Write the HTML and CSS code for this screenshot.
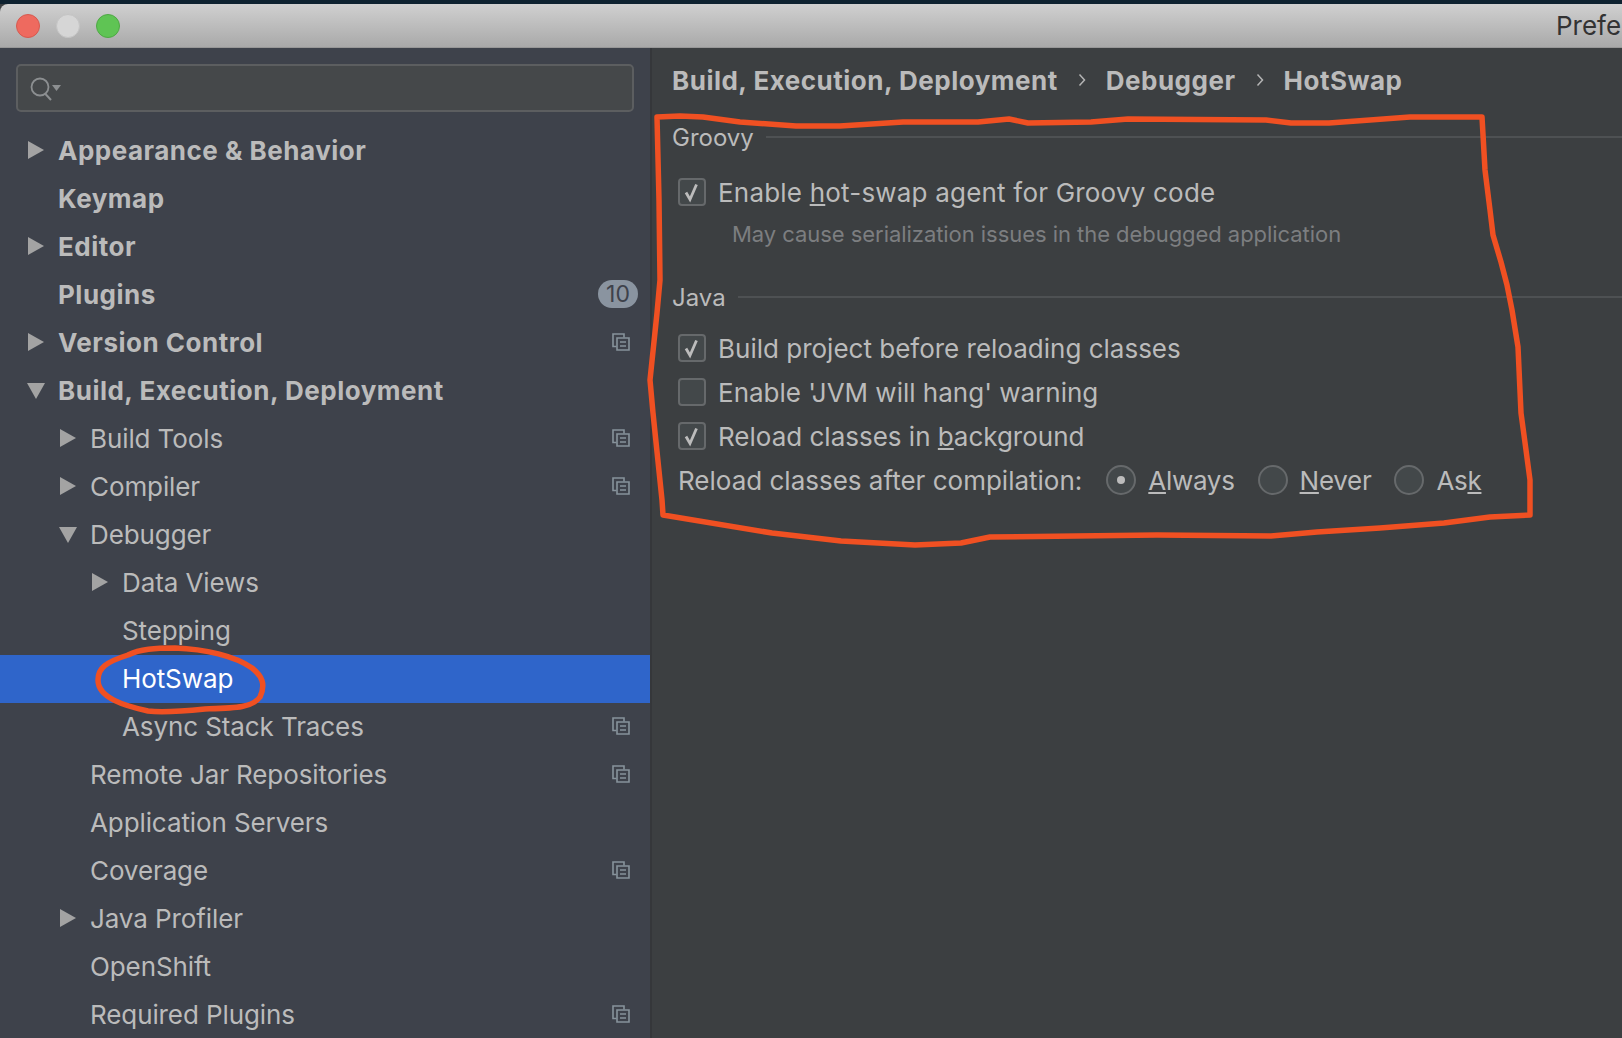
FILE: index.html
```html
<!DOCTYPE html>
<html lang="en">
<head>
  <meta charset="UTF-8" />
  <title>Preferences</title>
  <link rel="stylesheet" href="styles.css">
</head>
<body>
  <svg class="defs" width="0" height="0">
    <symbol id="copy" viewBox="0 0 18 18">
      <path d="M4.5 13.5H1V1h11v3.5" fill="none" stroke="currentColor" stroke-width="1.6"/>
      <path d="M5 5h12v12H5z" fill="none" stroke="currentColor" stroke-width="1.6"/>
      <path d="M8 9h6M8 13h6" stroke="currentColor" stroke-width="1.6"/>
    </symbol>
    <symbol id="check" viewBox="0 0 28 28">
      <path d="M8 14.500l4 7 6.500-15" fill="none" stroke="currentColor" stroke-width="2.800"/>
    </symbol>
  </svg>

  <div class="topstrip"></div>
  <header class="titlebar">
    <span class="light red"></span>
    <span class="light grey"></span>
    <span class="light green"></span>
    <span class="title">Preferences</span>
  </header>

  <div class="window">
    <aside class="sidebar">
      <div class="search">
        <svg width="36" height="28" viewBox="0 0 36 28">
          <circle cx="11" cy="12" r="8.500" fill="none" stroke="#8c8f91" stroke-width="1.800"/>
          <path d="M16 18.500l6 6.500" stroke="#8c8f91" stroke-width="2"/>
          <path d="M23 10h9l-4.500 6z" fill="#8c8f91"/>
        </svg>
      </div>

      <nav class="tree">
        <div class="row bold"><i class="arrow"></i>Appearance &amp; Behavior</div>
        <div class="row bold"><i class="noarrow"></i>Keymap</div>
        <div class="row bold"><i class="arrow"></i>Editor</div>
        <div class="row bold"><i class="noarrow"></i>Plugins<span class="badge">10</span></div>
        <div class="row bold"><i class="arrow"></i>Version Control<svg class="copy"><use href="#copy"/></svg></div>
        <div class="row bold"><i class="arrow open"></i>Build, Execution, Deployment</div>
        <div class="row lvl1"><i class="arrow"></i>Build Tools<svg class="copy"><use href="#copy"/></svg></div>
        <div class="row lvl1"><i class="arrow"></i>Compiler<svg class="copy"><use href="#copy"/></svg></div>
        <div class="row lvl1"><i class="arrow open"></i>Debugger</div>
        <div class="row lvl2"><i class="arrow"></i>Data Views</div>
        <div class="row lvl2"><i class="noarrow"></i>Stepping</div>
        <div class="row lvl2 selected"><i class="noarrow"></i>HotSwap</div>
        <div class="row lvl2"><i class="noarrow"></i>Async Stack Traces<svg class="copy"><use href="#copy"/></svg></div>
        <div class="row lvl1"><i class="noarrow"></i>Remote Jar Repositories<svg class="copy"><use href="#copy"/></svg></div>
        <div class="row lvl1"><i class="noarrow"></i>Application Servers</div>
        <div class="row lvl1"><i class="noarrow"></i>Coverage<svg class="copy"><use href="#copy"/></svg></div>
        <div class="row lvl1"><i class="arrow"></i>Java Profiler</div>
        <div class="row lvl1"><i class="noarrow"></i>OpenShift</div>
        <div class="row lvl1"><i class="noarrow"></i>Required Plugins<svg class="copy"><use href="#copy"/></svg></div>
      </nav>
    </aside>

    <main class="content">
      <div class="crumbs">
        <span>Build, Execution, Deployment</span>
        <svg class="chev" width="8" height="14" viewBox="0 0 8 14"><path d="M1.500 1.500L6.500 7l-5 5.500" fill="none" stroke="#b4b4b4" stroke-width="1.500"/></svg>
        <span>Debugger</span>
        <svg class="chev" width="8" height="14" viewBox="0 0 8 14"><path d="M1.500 1.500L6.500 7l-5 5.500" fill="none" stroke="#b4b4b4" stroke-width="1.500"/></svg>
        <span>HotSwap</span>
      </div>

      <section class="group groovy">
        <div class="group-title"><span>Groovy</span></div>
        <label class="opt first wide"><span class="box"><svg><use href="#check"/></svg></span>Enable&nbsp;<u>h</u>ot-swap agent for Groovy code</label>
        <p class="note">May cause serialization issues in the debugged application</p>
      </section>

      <section class="group java">
        <div class="group-title"><span>Java</span></div>
        <label class="opt first"><span class="box"><svg><use href="#check"/></svg></span>Build project before reloading classes</label>
        <label class="opt"><span class="box"></span>Enable 'JVM will hang' warning</label>
        <label class="opt"><span class="box"><svg><use href="#check"/></svg></span>Reload classes in&nbsp;<u>b</u>ackground</label>
        <div class="opt radios">
          <span class="radios-label">Reload classes after compilation:</span>
          <span class="radio on"></span><span class="radio-text"><u>A</u>lways</span>
          <span class="radio"></span><span class="radio-text"><u>N</u>ever</span>
          <span class="radio"></span><span class="radio-text">As<u>k</u></span>
        </div>
      </section>
    </main>
  </div>

  <!-- hand drawn red marks on top of the screenshot -->
  <svg class="marks" width="1622" height="1038" viewBox="0 0 1622 1038">
    <path d="M657 117L680 116L703 117L740 122L796 126L840 126L903 122L978 122L1009 119L1028 123L1091 122L1128 119L1266 120L1291 123L1329 123L1370 120L1410 117L1482 117L1485 170L1490 210L1493 235L1501 262L1507 285L1512 310L1518 347L1521 413L1526 450L1530 480L1530 515L1490 517L1444 523L1380 528L1317 532L1271 536L1157 535L990 537L961 543L915 545L841 541L772 533L663 515L662 500L653 413L650 380L657 313L660 280L659 200Z"/>
    <path d="M98 680C98 668 106 662 128 655C140 649 155 648 175 648C205 649 235 656 252 668C262 676 266 684 260 697C252 708 235 708 205 709C185 711 165 713 148 711C125 706 98 698 98 680Z"/>
  </svg>
</body>
</html>
```

FILE: styles.css
```css
* {
  box-sizing: border-box;
}
html, body {
  margin: 0;
  height: 100%;
  overflow: hidden;
}
body {
  position: relative;
  display: flex;
  flex-direction: column;
  background: #3c3f41;
  color: #bbbbbb;
  font-family: Inter, "Liberation Sans", sans-serif;
  font-size: 26px;
}
.defs {
  position: absolute;
}
.topstrip {
  height: 4px;
  flex: none;
  background: #0e2230;
}
.titlebar {
  height: 44px;
  flex: none;
  display: flex;
  align-items: center;
  overflow: hidden;
  padding-left: 16px;
  gap: 16px;
  background: linear-gradient(#d0d0d0, #a9a9a9);
  border-bottom: 1px solid #979797;
  border-radius: 8px 0 0 0;
}
.light {
  width: 24px;
  height: 24px;
  flex: none;
  border-radius: 50%;
}
.light.red {
  background: #ee6a5f;
  border: 1px solid #d65a50;
}
.light.grey {
  background: #d6d6d6;
  border: 1px solid #c4c4c4;
}
.light.green {
  background: #5fc454;
  border: 1px solid #4fa845;
}
.title {
  margin-left: 1420px;
  white-space: nowrap;
  color: #333;
}

.window {
  flex: 1;
  display: flex;
  min-height: 0;
}
.sidebar {
  width: 652px;
  flex: none;
  background: #3e424b;
  border-right: 2px solid #35373a;
  overflow: hidden;
}
.search {
  height: 48px;
  margin: 16px 16px 0 16px;
  padding: 9px 0 0 11px;
  background: #45484a;
  border: 2px solid #5c5e60;
  border-radius: 5px;
}
.search svg {
  display: block;
}
.tree {
  margin-top: 15px;
}
.row {
  height: 48px;
  display: flex;
  align-items: center;
  padding-left: 28px;
  padding-right: 20px;
  padding-bottom: 2px;
  white-space: nowrap;
}
.row.bold {
  font-weight: 700;
  letter-spacing: 0.5px;
}
.row.lvl1, .row.lvl2 {
  letter-spacing: -0.1px;
}
.row.lvl1 {
  padding-left: 60px;
}
.row.lvl2 {
  padding-left: 92px;
}
.row.selected {
  background: #2f65ca;
  color: #fff;
}
.arrow, .noarrow {
  width: 30px;
  flex: none;
}
.arrow {
  height: 0;
  position: relative;
}
.arrow::before {
  content: "";
  position: absolute;
  left: 0;
  top: -9px;
  border-left: 16px solid #a3a3a3;
  border-top: 9px solid transparent;
  border-bottom: 9px solid transparent;
}
.arrow.open::before {
  left: -1px;
  top: -7px;
  border-top: 16px solid #a3a3a3;
  border-left: 9px solid transparent;
  border-right: 9px solid transparent;
  border-bottom: 0;
}
.copy {
  width: 18px;
  height: 18px;
  margin-left: auto;
  color: #87939c;
}
.badge {
  margin-left: auto;
  margin-right: -8px;
  width: 40px;
  height: 28px;
  border-radius: 14px;
  background: #8a94a0;
  color: #3e424b;
  font-size: 23px;
  font-weight: 400;
  letter-spacing: 0;
  text-align: center;
  line-height: 28px;
}

.content {
  flex: 1;
  min-width: 0;
  padding: 18px 0 0 20px;
}
.crumbs {
  height: 28px;
  display: flex;
  align-items: center;
  font-weight: 700;
  letter-spacing: 0.5px;
  white-space: nowrap;
}
.chev {
  margin: 0 20px;
}
.group-title {
  height: 28px;
  display: flex;
  align-items: center;
  gap: 12px;
  font-size: 24px;
}
.group-title::after {
  content: "";
  flex: 1;
  height: 2px;
  background: #4e5153;
}
.groovy {
  margin-top: 29px;
}
.java {
  margin-top: 35px;
}
.opt {
  height: 44px;
  display: flex;
  align-items: center;
  margin-left: 6px;
  white-space: nowrap;
}
.opt.wide {
  letter-spacing: 0.2px;
}
.opt.first {
  margin-top: 15px;
}
.groovy .opt.first {
  margin-top: 19px;
}
.box {
  width: 28px;
  height: 28px;
  flex: none;
  margin-right: 12px;
  background: #43484a;
  border: 2px solid #66696b;
  border-radius: 4px;
  position: relative;
}
.box svg {
  position: absolute;
  left: -2px;
  top: -2px;
  width: 28px;
  height: 28px;
  color: #bcbcbc;
}
.note {
  margin: 6px 0 0 60px;
  height: 28px;
  line-height: 28px;
  font-size: 22px;
  letter-spacing: -0.05px;
  color: #7c7e80;
  white-space: nowrap;
}
.radios-label {
  margin-right: 24px;
}
.radio {
  width: 30px;
  height: 30px;
  flex: none;
  margin-right: 12px;
  border: 2px solid #66696b;
  border-radius: 50%;
  background: #43484a;
  display: flex;
  align-items: center;
  justify-content: center;
}
.radio.on::before {
  content: "";
  width: 8px;
  height: 8px;
  border-radius: 50%;
  background: #bcbcbc;
}
.radio-text {
  margin-right: 23px;
  letter-spacing: -0.3px;
}

.marks {
  position: absolute;
  left: 0;
  top: 0;
  pointer-events: none;
}
.marks path {
  fill: none;
  stroke: #f05022;
  stroke-width: 5.500;
  stroke-linejoin: round;
}
```
